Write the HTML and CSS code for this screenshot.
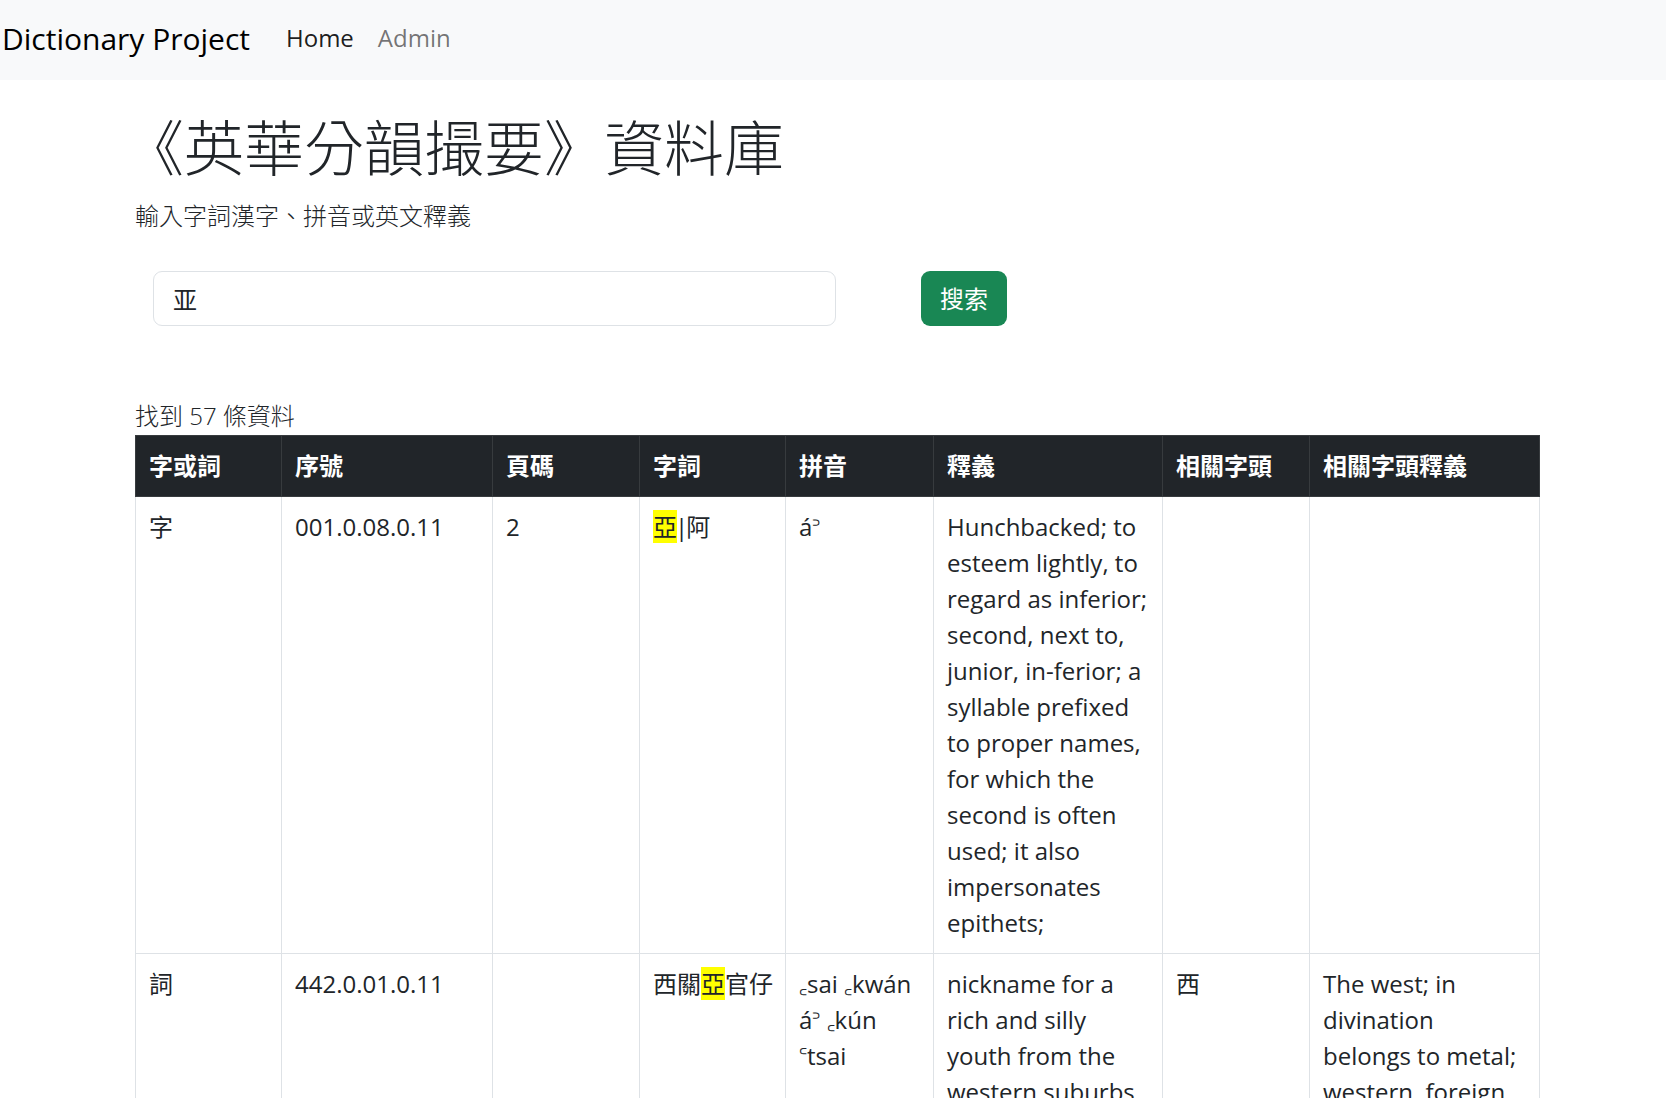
FILE: index.html
```html
<!DOCTYPE html>
<html lang="zh-Hant">
<head>
    <meta charset="UTF-8">
    <meta name="viewport" content="width=device-width, initial-scale=1.0">
    <title>英華分韻撮要 - Dictionary Project</title>
    <link rel="stylesheet" href="styles.css">
</head>
<body>
    <nav class="navbar">
        <a class="brand" href="#">Dictionary Project</a>
        <div class="nav-links">
            <a class="active" href="#">Home</a>
            <a href="#">Admin</a>
        </div>
    </nav>

    <main class="container">
        <h1 class="page-title">《英華分韻撮要》資料庫</h1>
        <p class="page-lead">輸入字詞漢字、拼音或英文釋義</p>

        <form class="search-form">
            <input class="search-input" type="text" name="q" value="亚">
            <button class="btn-search" type="submit">搜索</button>
        </form>

        <p class="result-count">找到 57 條資料</p>
        <table class="results-table">
            <colgroup>
                <col class="col-type">
                <col class="col-seq">
                <col class="col-page">
                <col class="col-word">
                <col class="col-pinyin">
                <col class="col-def">
                <col class="col-head">
                <col class="col-headdef">
            </colgroup>
            <thead>
                <tr>
                    <th>字或詞</th>
                    <th>序號</th>
                    <th>頁碼</th>
                    <th>字詞</th>
                    <th>拼音</th>
                    <th>釋義</th>
                    <th>相關字頭</th>
                    <th>相關字頭釋義</th>
                </tr>
            </thead>
            <tbody>
                <tr>
                    <td>字</td>
                    <td>001.0.08.0.11</td>
                    <td>2</td>
                    <td><mark>亞</mark><span class="sep">|</span>阿</td>
                    <td>á꜄</td>
                    <td>Hunchbacked; to esteem lightly, to regard as inferior; second, next to, junior, in-ferior; a syllable prefixed to proper names, for which the second is often used; it also impersonates epithets;</td>
                    <td></td>
                    <td></td>
                </tr>
                <tr>
                    <td>詞</td>
                    <td>442.0.01.0.11</td>
                    <td></td>
                    <td>西關<mark>亞</mark>官仔</td>
                    <td>꜀sai ꜀kwán á꜄ ꜀kún ꜂tsai</td>
                    <td>nickname for a rich and silly youth from the western suburbs of Canton.</td>
                    <td>西</td>
                    <td>The west; in divination belongs to metal; western, foreign, European; the west wind.</td>
                </tr>
            </tbody>
        </table>
    </main>
</body>
</html>
```

FILE: styles.css
```css
/* ========= VARIABLES ========= */
:root{
    --text:#212529;
    --line:#dee2e6;
    --dark-line:#373b3e;
    --green:#198754;
    --light:#f8f9fa;
    --mark:#ffff00;
}

/* ========= RESET & TYPE ========= */
*{margin:0;padding:0;box-sizing:border-box;}
body{
    font-family:"Open Sans","Noto Sans CJK TC","DejaVu Sans",sans-serif;
    font-size:24px;line-height:1.5;
    color:var(--text);background:#fff;
}

/* ========= NAVBAR ========= */
.navbar{display:flex;align-items:center;height:80px;padding:0 2px 4px;background:var(--light);}
.brand{font-size:30px;color:#000;text-decoration:none;margin-right:24px;}
.nav-links{display:flex;}
.nav-links a{padding:0 12px;color:rgba(0,0,0,.55);text-decoration:none;}
.nav-links a.active{color:rgba(0,0,0,.9);}

/* ========= CONTAINER ========= */
.container{width:1404px;margin:0 0 0 135px;}

/* ========= HEADER ========= */
.page-title{font-size:60px;font-weight:300;line-height:1.2;margin:32px 0 14px -11px;}
.page-lead{font-size:24px;font-weight:300;}

/* ========= SEARCH ========= */
.search-form{display:flex;align-items:center;margin-top:37px;padding-left:18px;}
.search-input{
    width:683px;height:55px;padding:0 19px;
    border:1px solid var(--line);border-radius:9px;
    font:inherit;color:var(--text);background:#fff;outline:none;
}
.btn-search{
    margin-left:85px;height:55px;padding:0 19px;
    border:none;border-radius:9px;
    background:var(--green);color:#fff;font:inherit;cursor:pointer;
}

/* ========= RESULTS ========= */
.result-count{margin-top:72px;line-height:36px;font-weight:300;}
.results-table{width:1404px;table-layout:fixed;border-collapse:collapse;margin-top:1px;}
.col-type{width:146px;}
.col-seq{width:211px;}
.col-page{width:147px;}
.col-word{width:146px;}
.col-pinyin{width:148px;}
.col-def{width:229px;}
.col-head{width:147px;}
.col-headdef{width:230px;}
.results-table th,
.results-table td{
    padding:12px 12px 12px 13px;border:1px solid var(--line);
    text-align:left;vertical-align:top;
}
.results-table th{background:var(--text);color:#fff;font-weight:700;border-color:var(--dark-line);}
.results-table mark{background:var(--mark);color:inherit;padding:0;}
.sep{letter-spacing:-2px;margin-left:-2px;}
```
